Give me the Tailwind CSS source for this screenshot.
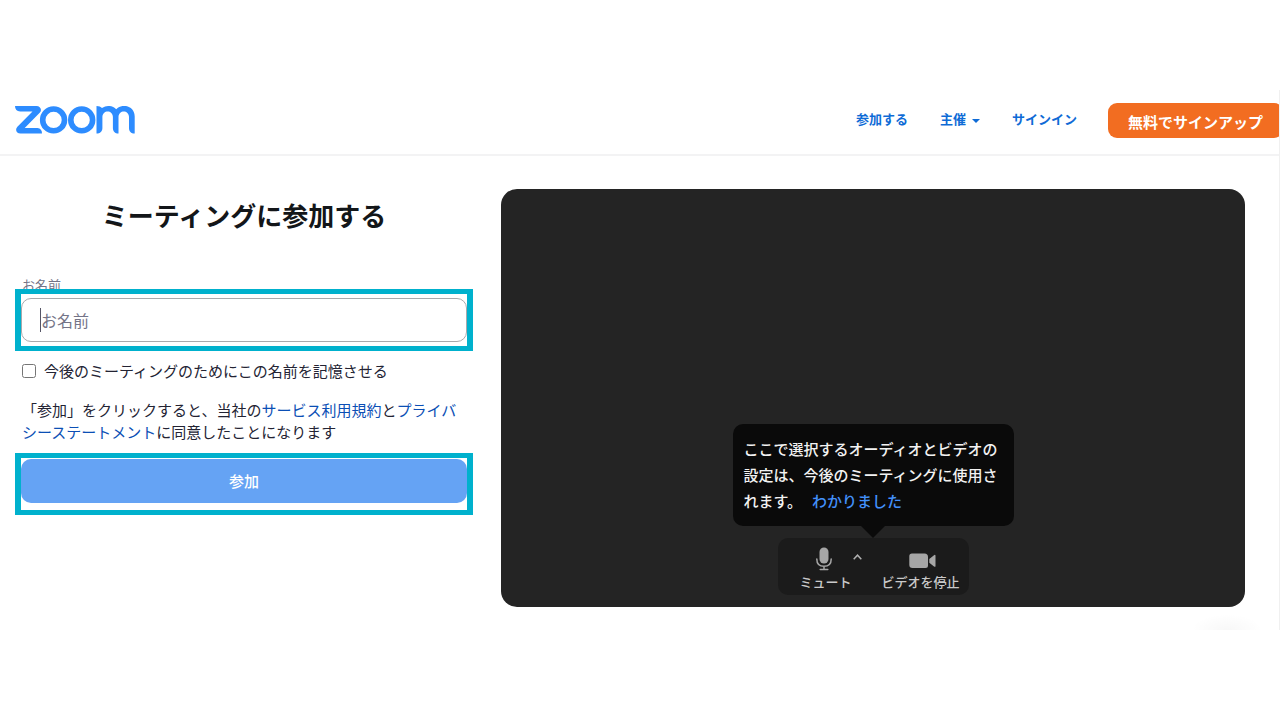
<!DOCTYPE html>
<html lang="ja">
<head>
<meta charset="utf-8">
<meta name="viewport" content="width=device-width, initial-scale=1">
<title>ミーティングに参加する - Zoom</title>
<script src="https://cdn.jsdelivr.net/npm/@tailwindcss/browser@4"></script>
</head>
<body class="bg-white py-[90px] font-['Noto_Sans_CJK_JP',sans-serif] text-[15px] text-[#232333]">
<div class="relative h-[540px] overflow-hidden border-r border-[#f0f0f0]">
  <header class="flex h-[66px] items-center justify-between border-b-2 border-[#f3f3f4] pl-[15px]">
    <a href="#" aria-label="Zoom" class="block pb-1">
      <svg class="block h-7 w-[120px]" viewBox="0 0 120 28" fill="none" stroke="#2d8cff" stroke-width="5.6" stroke-linejoin="round">
        <path fill="#2d8cff" stroke="none" d="M0 0H21.500C25.300 0 27.500 3.800 24.700 6.800L9.700 22H22.500Q27 22.500 27 27.500H5.500C1.500 27.500-.300 23.600 2.400 20.700L17.500 5.500H5.200Q0 5.200 0 0Z"/>
        <circle cx="38.600" cy="13.900" r="10.900"/>
        <circle cx="66.700" cy="13.900" r="10.900"/>
        <path fill="#2d8cff" stroke="none" d="M81.500 0C84 0 85.800.800 87 2C92.200-1.300 98.300-.300 101.200 3.200C108-3.500 119.700.300 119.700 10.500V27.500C116 27.500 114 25.500 114 22V11C114 3.500 103.500 3.500 103.500 11V27.500C100 27.500 97.900 25.500 97.900 22V11C97.900 3.500 87.400 3.500 87.400 11V22C87.400 25.500 85.200 27.500 81.500 27.500Z"/>
      </svg>
    </a>
    <nav class="-mr-1 flex items-center text-[13px] font-bold text-[#0e6bd6]">
      <a href="#" class="mr-8 pb-1.5">参加する</a>
      <button type="button" class="mr-8 flex items-center gap-1.5 pb-1.5 font-bold">主催
        <svg class="mt-1 h-1 w-2" viewBox="0 0 8 4" fill="currentColor"><path d="M0 0H8L4 4Z"/></svg>
      </button>
      <a href="#" class="mr-[31px] pb-1.5">サインイン</a>
      <a href="#" class="mb-1 flex h-[35px] items-center rounded-[9px] bg-[#f26d21] px-5 pt-1 text-[15px] text-white">無料でサインアップ</a>
    </nav>
  </header>

  <main class="grid grid-cols-[458fr_744fr] gap-7 pt-[33px] pr-[34px] pl-[15px]">
    <form class="flex flex-col">
      <h1 class="pt-1.5 text-center text-[26px] leading-10 font-bold text-[#131619]">ミーティングに参加する</h1>
      <label for="name" class="mt-10 px-[7px] text-[13px] leading-5 text-[#747487]">お名前</label>
      <div class="relative -mt-1.5 flex h-[62px] items-center border-x-[6px] border-y-[5px] border-[#00b1cd] bg-white">
        <input id="name" type="text" placeholder="お名前" class="h-11 w-full rounded-[10px] border border-[#a9a9ac] pl-[19px] text-base outline-none placeholder:text-[#747487]">
        <span class="absolute left-[19px] h-6 w-px bg-[#555566]"></span>
      </div>
      <div class="mt-[9px] flex items-center gap-2 pl-[7px]">
        <input id="remember" type="checkbox" class="size-3.5">
        <label for="remember" class="leading-[22px]">今後のミーティングのためにこの名前を記憶させる</label>
      </div>
      <p class="mt-[17px] pr-1 pl-[7px] leading-[22px]">「参加」をクリックすると、当社の<a href="#" class="text-[#0b4fb5]">サービス利用規約</a>と<a href="#" class="text-[#0b4fb5]">プライバシーステートメント</a>に同意したことになります</p>
      <div class="mt-2.5 h-[62px] border-x-[6px] border-y-[5px] border-[#00b1cd] pt-px">
        <button type="button" class="block h-11 w-full rounded-[10px] bg-[#65a3f4] font-medium text-white">参加</button>
      </div>
    </form>

    <section aria-label="ビデオプレビュー" class="flex h-[418px] flex-col items-center justify-end rounded-2xl bg-[#242424] pb-3">
      <div role="tooltip" class="relative mb-3 w-[281px] rounded-[10px] bg-[#0a0a0a] px-[11px] py-3 font-medium text-[#f2f2f2]">
        <p class="leading-[26px]">ここで選択するオーディオとビデオの設定は、今後のミーティングに使用されます。<button type="button" class="ml-2.5 font-medium text-[#4391fb]">わかりました</button></p>
        <svg class="absolute top-full left-1/2 h-3 w-6 -translate-x-1/2" viewBox="0 0 24 12" fill="#0a0a0a"><path d="M0 0H24L12 12Z"/></svg>
      </div>
      <div class="flex h-[57px] w-[191px] items-end justify-between rounded-[10px] bg-[#1b1b1b] pr-[9px] pb-1 pl-[22px] text-[13px] leading-[18px] font-medium text-[#c9c9c9]">
        <div class="flex items-start">
          <button type="button" class="flex flex-col items-center gap-0.5">
            <svg class="mr-1 h-6 w-4" viewBox="0 0 16 24" fill="none" stroke="#a6a6a6" stroke-width="1.500" stroke-linecap="round"><rect x="3.500" y="0.500" width="9" height="16" rx="4.500" fill="#a6a6a6" stroke="none"/><path d="M.800 12C.800 16.800 3.800 19.300 8 19.300S15.200 16.800 15.200 12M8 19.500V22.500M4.200 22.600H11.800"/></svg>
            ミュート
          </button>
          <button type="button" aria-label="オーディオオプション" class="mt-[7px] ml-px">
            <svg class="h-[6px] w-[9px]" viewBox="0 0 9 6" fill="none" stroke="#b0b0b0" stroke-width="1.500"><path d="M.700 5.200L4.500 1.200L8.300 5.200"/></svg>
          </button>
        </div>
        <button type="button" class="flex flex-col items-center gap-0.5">
          <svg class="ml-1 h-[18px] w-[27px]" viewBox="0 0 27 18" fill="#a6a6a6"><path d="M3 0.500H15.500Q19 .500 19 4V12.500Q19 15 16.500 15H3.500Q.300 15 .300 11.800V3.200Q.300.500 3 .500ZM20.300 6L25 2.200Q26.500 1.200 26.500 3V13Q26.500 14.500 25 13.400L20.300 9.800Z"/></svg>
          ビデオを停止
        </button>
      </div>
    </section>
  </main>
  <div class="absolute right-4 bottom-0 h-4 w-[72px] bg-radial-[at_50%_100%] from-black/3 to-transparent to-70%"></div>
</div>
</body>
</html>
